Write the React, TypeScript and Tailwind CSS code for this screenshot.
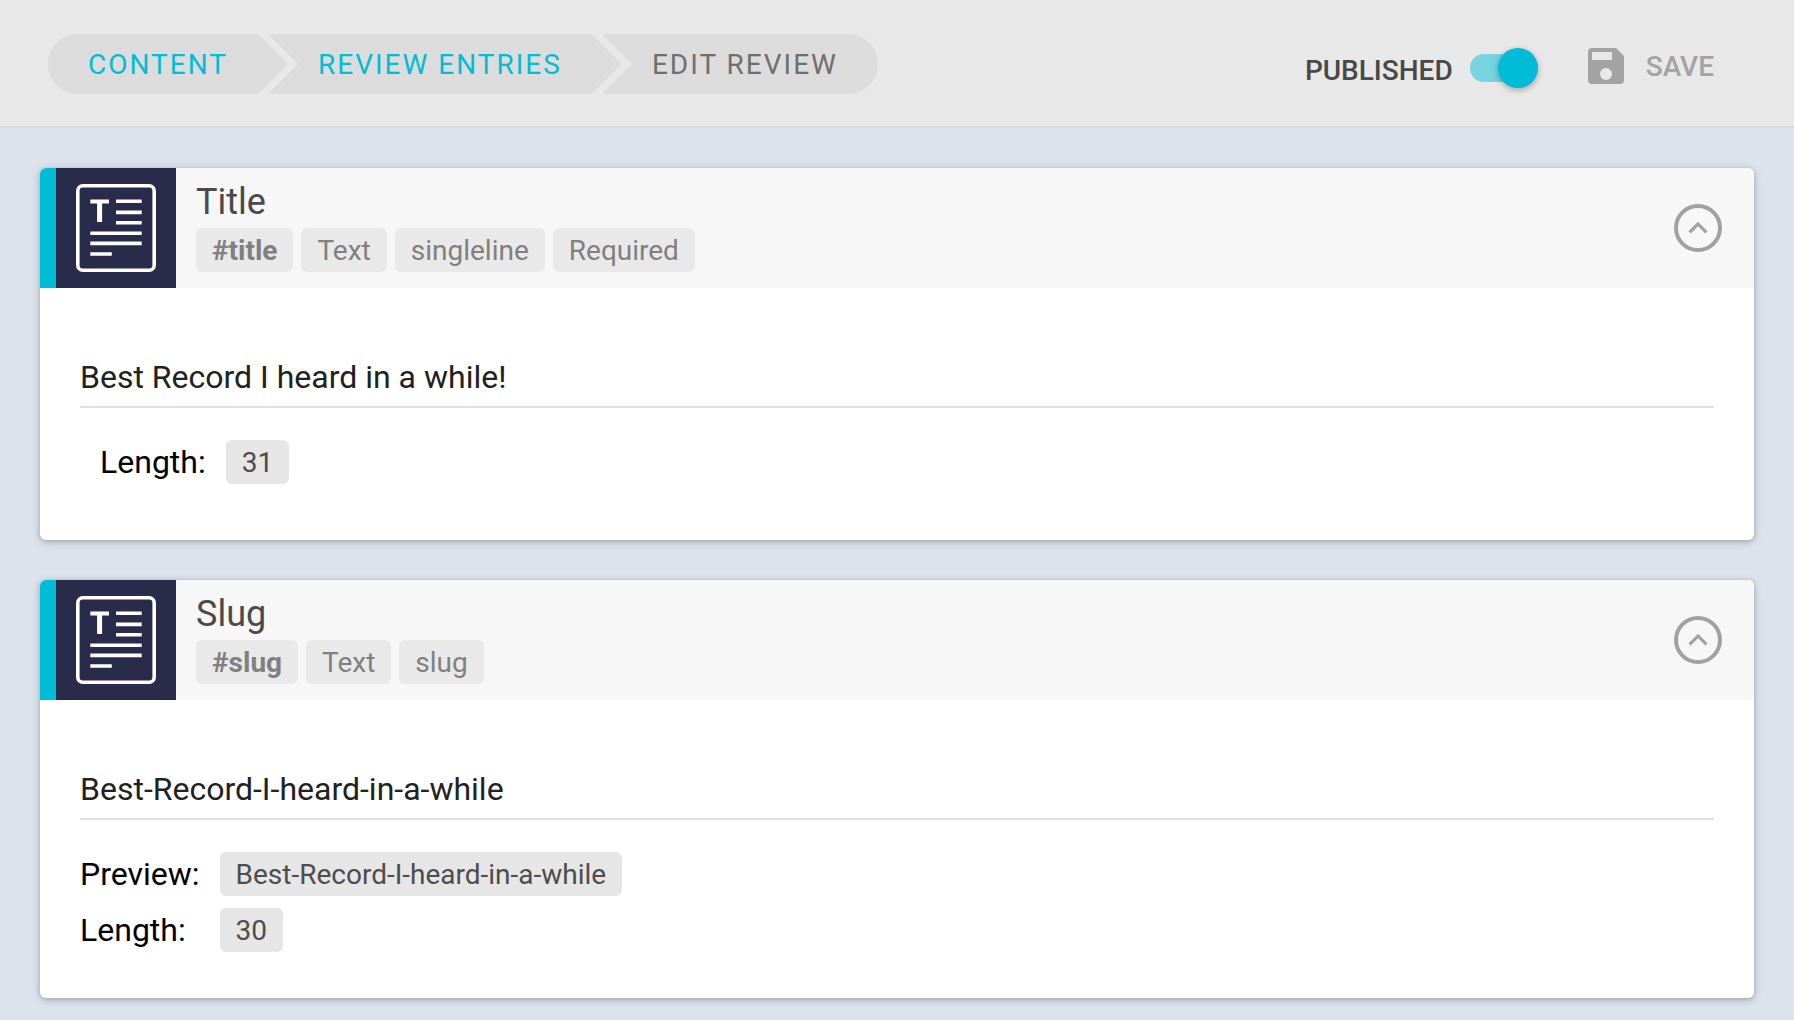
import { useId, useState, type ReactNode } from "react";

function Breadcrumbs() {
  return (
    <nav aria-label="Breadcrumb">
      <ol className="flex h-[60px] overflow-hidden rounded-full text-[28px] leading-[62px] tracking-[2px] whitespace-nowrap">
        <li className="h-full bg-[#dcdcdc] pr-[60px] pl-10 [clip-path:polygon(0_0,calc(100%_-_30px)_0,100%_50%,calc(100%_-_30px)_100%,0_100%)]">
          <a href="#content" className="text-[#00bcd7]">CONTENT</a>
        </li>
        <li className="-ml-5 h-full bg-[#dcdcdc] pr-[60px] pl-[50px] [clip-path:polygon(0_0,calc(100%_-_30px)_0,100%_50%,calc(100%_-_30px)_100%,0_100%,30px_50%)]">
          <a href="#entries" className="text-[#00bcd7]">REVIEW ENTRIES</a>
        </li>
        <li
          aria-current="page"
          className="-ml-5 h-full bg-[#dcdcdc] pr-10 pl-[50px] text-[#6f6f6f] [clip-path:polygon(0_0,100%_0,100%_100%,0_100%,30px_50%)]"
        >
          EDIT REVIEW
        </li>
      </ol>
    </nav>
  );
}

function PublishedSwitch() {
  const [published, setPublished] = useState(true);
  return (
    <label className="flex cursor-pointer items-center">
      <span className="pt-1.5 text-[#484848]">PUBLISHED</span>
      <input
        type="checkbox"
        role="switch"
        checked={published}
        onChange={(e) => setPublished(e.target.checked)}
        className="peer sr-only"
      />
      <span className="ml-[17px] flex h-7 w-[68px] items-center rounded-full bg-[#bdbdbd] peer-checked:justify-end peer-checked:bg-[#77d3e0] peer-checked:[&>span]:bg-[#00bcd7]">
        <span className="size-10 shrink-0 rounded-full bg-[#fafafa] shadow-[0_2px_6px_rgba(0,0,0,0.3)]" />
      </span>
    </label>
  );
}

function TextFieldIcon() {
  return (
    <svg viewBox="0 0 120 120" className="size-[120px] shrink-0 bg-[#282c4a]" fill="none" stroke="#fff" strokeWidth="3.6" aria-hidden="true">
      <rect x="21.8" y="17.8" width="76.4" height="84.4" rx="5" />
      <path d="M34.3 33.6H53" strokeWidth="4" />
      <path d="M43.6 33V54" strokeWidth="5" />
      <path d="M60 33.2H85.7M60 44.4H85.7M60 54.8H85.7M34.3 65.2H85.7M34.3 75.4H85.7M34.3 86H55.8" />
    </svg>
  );
}

function Chip({ children }: { children: ReactNode }) {
  return (
    <span className="h-11 rounded-md bg-[#e6e6e6] px-4 text-[28px] leading-[46px] text-[#4d4d4d]">
      {children}
    </span>
  );
}

function FieldCard({ title, tags, value, children }: { title: string; tags: string[]; value: string; children: ReactNode }) {
  const [open, setOpen] = useState(true);
  const [text, setText] = useState(value);
  const id = useId();
  return (
    <section className="overflow-hidden rounded-md bg-white shadow-[0_2px_10px_rgba(0,0,0,0.2),0_1px_4px_rgba(0,20,20,0.14)]">
      <header className="flex h-[120px] bg-[#f7f7f7]">
        <div className="w-4 shrink-0 bg-[#00bcd7]" />
        <TextFieldIcon />
        <div className="ml-5 flex-1 pt-3">
          <label htmlFor={id} className="block text-4xl leading-[44px] text-[#4a4a4a]">{title}</label>
          <ul className="mt-1 flex gap-2 text-[28px] leading-[46px] text-[#808080]">
            {tags.map((tag) => (
              <li key={tag} className="h-11 rounded-md bg-[#e9e9e9] px-4 first:font-bold">{tag}</li>
            ))}
          </ul>
        </div>
        <button
          type="button"
          aria-label={`Toggle ${title}`}
          aria-expanded={open}
          onClick={() => setOpen(!open)}
          className="mr-8 flex size-12 items-center justify-center self-center rounded-full border-4 border-[#a1a1a1] text-[#a1a1a1]"
        >
          <svg viewBox="0 0 24 24" className="size-[38px] shrink-0" fill="currentColor" aria-hidden="true">
            <path d="M12 8l-6 6 1.41 1.41L12 10.83l4.59 4.58L18 14z" />
          </svg>
        </button>
      </header>
      {open && (
        <div className="px-10 pt-[60px]">
          <input
            id={id}
            type="text"
            value={text}
            onChange={(e) => setText(e.target.value)}
            className="block h-[60px] w-full border-b-2 border-[#e0e0e0] bg-transparent text-[32px] text-[#212121] outline-none"
          />
          {children}
        </div>
      )}
    </section>
  );
}

export default function App() {
  return (
    <div className="min-h-screen bg-[#dce3ec] font-[Roboto,sans-serif] text-black">
      <header className="flex items-start justify-between border-b-2 border-[#dadbdc] bg-[#e8e8e8] pt-[34px] pr-20 pb-8 pl-12">
        <Breadcrumbs />
        <div className="mt-2 flex h-[52px] items-center text-[28px] font-medium">
          <PublishedSwitch />
          <button type="button" className="ml-11 flex items-center gap-4 pb-1 text-[#a3a3a3]">
            <svg viewBox="0 0 24 24" className="size-12" fill="currentColor" aria-hidden="true">
              <path d="M19 3H5a2 2 0 0 0-2 2v14a2 2 0 0 0 2 2h14a2 2 0 0 0 2-2V7l-4-4zM17 3H5zM12 19a3 3 0 1 1 0-6 3 3 0 0 1 0 6zM15 9H5V5h10z" fillRule="evenodd" />
            </svg>
            <span className="pt-0.5">SAVE</span>
          </button>
        </div>
      </header>
      <main className="flex flex-col gap-10 p-10">
        <FieldCard title="Title" tags={["#title", "Text", "singleline", "Required"]} value="Best Record I heard in a while!">
          <dl className="grid grid-cols-[auto_1fr] items-center gap-x-5 px-5 pt-8 pb-14">
            <dt className="text-[32px] leading-[44px]">Length:</dt>
            <dd className="flex"><Chip>31</Chip></dd>
          </dl>
        </FieldCard>
        <FieldCard title="Slug" tags={["#slug", "Text", "slug"]} value="Best-Record-I-heard-in-a-while">
          <dl className="grid grid-cols-[auto_1fr] items-center gap-x-5 gap-y-3 pt-8 pb-[46px]">
            <dt className="text-[32px] leading-[44px]">Preview:</dt>
            <dd className="flex"><Chip>Best-Record-I-heard-in-a-while</Chip></dd>
            <dt className="text-[32px] leading-[44px]">Length:</dt>
            <dd className="flex"><Chip>30</Chip></dd>
          </dl>
        </FieldCard>
      </main>
    </div>
  );
}
